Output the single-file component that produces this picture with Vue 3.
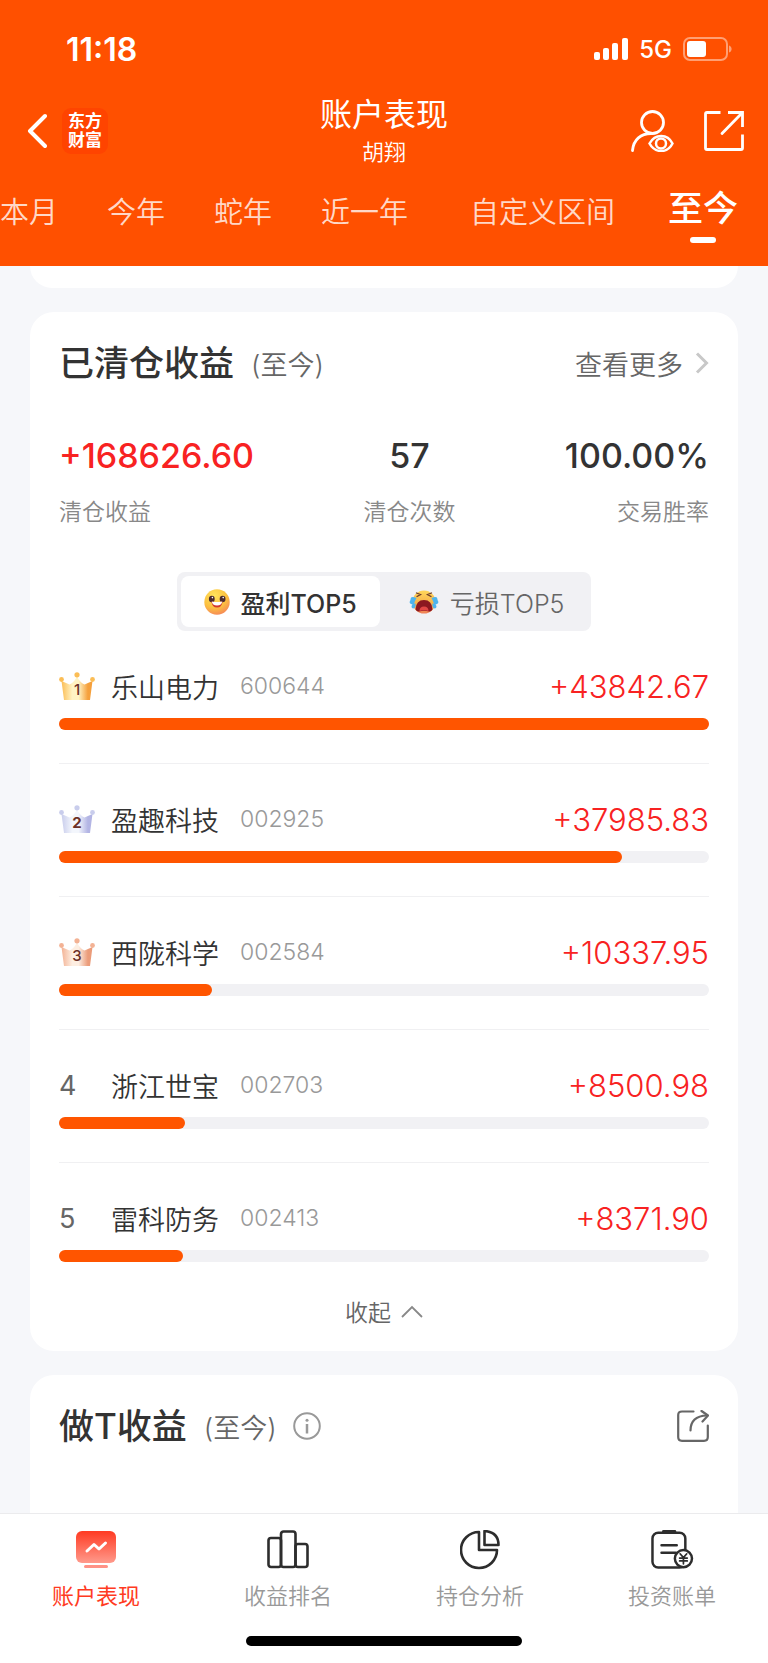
<template>
  <div class="page">
    <header class="header">
      <div class="status-bar">
        <span class="time">11:18</span>
        <div class="status-right">
          <svg class="signal" viewBox="0 0 34 22" width="34" height="22" fill="#fff">
            <rect x="0" y="14" width="6" height="8" rx="2" />
            <rect x="9" y="10" width="6" height="12" rx="2" />
            <rect x="18" y="5" width="6" height="17" rx="2" />
            <rect x="28" y="0" width="6" height="22" rx="2" />
          </svg>
          <span class="network">5G</span>
          <svg viewBox="0 0 50 24" width="50" height="24">
            <rect x="1" y="1" width="43" height="22" rx="6" fill="none" stroke="#fff" stroke-opacity="0.45" stroke-width="2" />
            <rect x="4" y="4" width="19" height="16" rx="3" fill="#fff" />
            <path d="M46 8.500c3.500 1 3.500 6 0 7z" fill="#fff" fill-opacity="0.45" />
          </svg>
        </div>
      </div>

      <div class="nav-bar">
        <div class="nav-left">
          <button class="icon-btn" aria-label="返回">
            <svg viewBox="0 0 20 36" width="20" height="36" fill="none" stroke="#fff" stroke-width="4" stroke-linecap="round" stroke-linejoin="round">
              <path d="M18 3 3 18l15 15" />
            </svg>
          </button>
          <span class="logo">东方<br />财富</span>
        </div>
        <div class="nav-title">
          <h1>账户表现</h1>
          <p>胡翔</p>
        </div>
        <div class="nav-right">
          <button class="icon-btn" aria-label="账户查看">
            <svg viewBox="0 0 43 42" width="43" height="42" fill="none" stroke="#fff" stroke-width="2.800" stroke-linecap="round">
              <circle cx="21.500" cy="12.500" r="11" />
              <path d="M1.500 40.500C2.500 29.500 10 23.500 20 23.500" />
              <path d="M18.500 33.500C24 23.500 36.500 23.500 41.500 33.500C36.500 43.500 24 43.500 18.500 33.500Z" stroke-width="2.500" />
              <circle cx="30" cy="33.500" r="5" stroke-width="2.500" />
            </svg>
          </button>
          <button class="icon-btn" aria-label="分享">
            <svg viewBox="0 0 40 40" width="40" height="40" fill="none" stroke="#fff" stroke-width="2.800" stroke-linejoin="round">
              <path d="M16.500 1.500H3q-1.500 0-1.500 1.500V37q0 1.500 1.500 1.500H37q1.500 0 1.500-1.500V23.500" />
              <path d="M24 1.500H38.500V16" stroke-linejoin="miter" />
              <path d="M38 2 18 22.500" stroke-linecap="round" />
            </svg>
          </button>
        </div>
      </div>

      <nav class="range-tabs">
        <button
          v-for="item in ranges"
          :key="item"
          :class="['range-tab', { active: item === currentRange, custom: item === '自定义区间' }]"
          @click="currentRange = item"
        >{{ item }}</button>
      </nav>
    </header>

    <main class="content">
      <section class="card card-prev"></section>

      <section class="card">
        <div class="card-head">
          <h2>已清仓收益</h2>
          <span class="range-text">({{ currentRange }})</span>
          <a class="more" href="#">
            查看更多
            <svg viewBox="0 0 14 22" width="14" height="22" fill="none" stroke="#c8c8c8" stroke-width="3">
              <path d="M2 1.500 11.500 11 2 20.500" />
            </svg>
          </a>
        </div>

        <div class="stats">
          <div v-for="s in stats" :key="s.label" class="stat">
            <div :class="['stat-value', { up: s.up }]">{{ s.value }}</div>
            <div class="stat-label">{{ s.label }}</div>
          </div>
        </div>

        <div class="switch">
          <button :class="{ active: mode === 'win' }" @click="mode = 'win'">
            <svg viewBox="0 0 26 26" width="26" height="26">
              <defs>
                <radialGradient id="smile" cx="0.4" cy="0.25" r="0.8">
                  <stop offset="0" stop-color="#ffe45c" />
                  <stop offset="0.6" stop-color="#fcc040" />
                  <stop offset="1" stop-color="#f5855a" />
                </radialGradient>
              </defs>
              <circle cx="13" cy="13" r="12.700" fill="url(#smile)" />
              <ellipse cx="7.800" cy="10" rx="2.900" ry="3.200" fill="#4b2b2e" />
              <ellipse cx="18.600" cy="10" rx="2.900" ry="3.200" fill="#4b2b2e" />
              <circle cx="8.400" cy="8.600" r="0.800" fill="#fff" />
              <circle cx="19.200" cy="8.600" r="0.800" fill="#fff" />
              <path d="M7.500 12.500q5.500 1.300 11 0-.5 6-5.500 6t-5.500-6z" fill="#d3372c" />
              <path d="M7.800 12.500q5.200 1.200 10.400 0-.5 4-5.200 4t-5.200-4z" fill="#fff" />
            </svg>
            <span>盈利TOP5</span>
          </button>
          <button :class="{ active: mode === 'lose' }" @click="mode = 'lose'">
            <svg viewBox="0 0 30 26" width="30" height="26">
              <defs>
                <linearGradient id="cry" x1="0" y1="0" x2="0" y2="1">
                  <stop offset="0" stop-color="#ffd75a" />
                  <stop offset="0.6" stop-color="#f7b04a" />
                  <stop offset="1" stop-color="#ef8058" />
                </linearGradient>
              </defs>
              <circle cx="15" cy="13" r="11.500" fill="url(#cry)" />
              <path d="M7.500 4l4 1.500-3.500 2M22.500 4l-4 1.500 3.500 2" stroke="#6b3b2c" stroke-width="1.300" fill="none" stroke-linecap="round" />
              <path d="M6.500 20.500Q7 11 15 11t8.500 9.500q-1.500 2.500-3.500 2-5-1.500-10 0-2 .5-3.500-2z" fill="#8c1820" />
              <path d="M10.500 22q0-4.500 4.500-4.500t4.500 4.500q-4.500-1.500-9 0z" fill="#e24745" />
              <path d="M7.500 9Q1 6.500 1.500 11q-2 3 .5 4 3 1 4-3zM4 14.500q-3 4 0 5 3 0 2.500-5z" fill="#4db4ee" />
              <path d="M22.500 9Q29 6.500 28.500 11q2 3-.5 4-3 1-4-3zM26 14.500q3 4 0 5-3 0-2.500-5z" fill="#4db4ee" />
            </svg>
            <span>亏损TOP5</span>
          </button>
        </div>

        <ul class="rank-list">
          <li v-for="(stock, index) in shownStocks" :key="stock.code" class="rank-item">
            <div class="rank-row">
              <span class="rank-no">
                <svg v-if="index < 3" viewBox="0 0 36 28" width="36" height="28">
                  <defs>
                    <linearGradient :id="'crown' + index">
                      <stop offset="0" :stop-color="crowns[index].edge" />
                      <stop offset="0.35" :stop-color="crowns[index].mid" />
                      <stop offset="0.55" :stop-color="crowns[index].mid" />
                      <stop offset="0.85" :stop-color="crowns[index].side" />
                    </linearGradient>
                  </defs>
                  <path d="M2.500 9l8 3.500Q15.500 10.500 18 4q2.500 6.500 7.500 8.500l8-3.500L31 28H5z" :fill="'url(#crown' + index + ')'" />
                  <g :fill="crowns[index].edge">
                    <circle cx="2.500" cy="7.500" r="2.400" />
                    <circle cx="18" cy="2.800" r="2.600" />
                    <circle cx="33.500" cy="7.500" r="2.400" />
                  </g>
                  <text x="18" y="23" text-anchor="middle" :class="['crown-no', 'n' + index]">{{ index + 1 }}</text>
                </svg>
                <template v-else>{{ index + 1 }}</template>
              </span>
              <span class="name">{{ stock.name }}</span>
              <span class="code">{{ stock.code }}</span>
              <span class="profit">+{{ stock.profit.toFixed(2) }}</span>
            </div>
            <div class="bar">
              <div class="bar-inner" :style="{ width: barWidth(stock) }"></div>
            </div>
          </li>
        </ul>

        <button class="fold" @click="folded = !folded">
          {{ folded ? '展开' : '收起' }}
          <svg :class="{ down: folded }" viewBox="0 0 22 13" width="22" height="13" fill="none" stroke="#888" stroke-width="1.800">
            <path d="M1 12 11 2l10 10" />
          </svg>
        </button>
      </section>

      <section class="card card-last">
        <div class="card-head">
          <h2>做T收益</h2>
          <span class="range-text">({{ currentRange }})</span>
          <button class="icon-btn info" aria-label="说明">
            <svg viewBox="0 0 28 28" width="28" height="28" fill="none" stroke="#999" stroke-width="2">
              <circle cx="14" cy="14" r="12.800" />
              <path d="M14 12v9.500" stroke-width="2.500" />
              <circle cx="14" cy="8.300" r="1.500" fill="#999" stroke="none" />
            </svg>
          </button>
          <button class="icon-btn share" aria-label="分享做T收益">
            <svg viewBox="0 0 32 32" width="32" height="32" fill="none" stroke="#666" stroke-width="2.200" stroke-linecap="round" stroke-linejoin="round">
              <path d="M16.500 1.500H5Q1.200 1.500 1.200 5V27q0 3.800 3.800 3.800H27q3.800 0 3.800-3.800V15.500" />
              <path d="M13.500 20.500Q13.500 6 30 5.500" />
              <path d="M24.500 1 31 5.500l-5.500 6" />
            </svg>
          </button>
        </div>
      </section>
    </main>

    <footer class="footer">
      <nav class="tab-bar">
        <a href="#" class="tab active">
          <svg viewBox="0 0 40 40" width="40" height="40">
            <defs>
              <linearGradient id="board" x1="0" y1="0" x2="0" y2="1">
                <stop offset="0" stop-color="#ff3a22" />
                <stop offset="1" stop-color="#ff9a8c" />
              </linearGradient>
            </defs>
            <rect x="0" y="1" width="40" height="32" rx="6" fill="url(#board)" />
            <rect x="8" y="35" width="24" height="3" rx="1.500" fill="#ff9286" />
            <path d="M11 21l7-6.500 5 4.500 6.500-6" fill="none" stroke="#fff" stroke-width="3" stroke-linecap="round" stroke-linejoin="round" />
          </svg>
          <span>账户表现</span>
        </a>
        <a href="#" class="tab">
          <svg viewBox="0 0 42 40" width="42" height="40" fill="none" stroke="#2d2d2d" stroke-width="2.600">
            <rect x="1.500" y="8" width="12.500" height="29" rx="2.500" />
            <rect x="14" y="1.500" width="14.500" height="35.500" rx="2.500" />
            <rect x="28.500" y="14" width="12" height="23" rx="2.500" />
          </svg>
          <span>收益排名</span>
        </a>
        <a href="#" class="tab">
          <svg viewBox="0 0 40 40" width="40" height="40" fill="none" stroke="#2d2d2d" stroke-width="2.600" stroke-linejoin="round">
            <path d="M19 2A18 18 0 1 0 37 20H19z" />
            <path d="M24.500 1V15H38.500Q38.500 2 24.500 1z" />
          </svg>
          <span>持仓分析</span>
        </a>
        <a href="#" class="tab">
          <svg viewBox="0 0 44 42" width="44" height="42" fill="none" stroke="#2d2d2d" stroke-width="2.600" stroke-linecap="round">
            <rect x="1.500" y="2.800" width="34.500" height="36.500" rx="6" />
            <path d="M13 1.600H25" stroke-width="3" />
            <path d="M11 16H27M11 24H26" />
            <circle cx="34" cy="30" r="9" fill="#fff" />
            <path d="M30.500 25l3.500 4 3.500-4M34 29v6.500M30 29.500h8M30 32.500h8" stroke-width="1.800" />
          </svg>
          <span>投资账单</span>
        </a>
      </nav>
      <div class="home-line"></div>
    </footer>
  </div>
</template>

<script setup>
import { ref, computed } from 'vue'

const ranges = ['本月', '今年', '蛇年', '近一年', '自定义区间', '至今']
const currentRange = ref('至今')

const mode = ref('win')
const folded = ref(false)

const stats = [
  { value: '+168626.60', label: '清仓收益', up: true },
  { value: '57', label: '清仓次数' },
  { value: '100.00%', label: '交易胜率' },
]

const stocks = ref([
  { name: '乐山电力', code: '600644', profit: 43842.67 },
  { name: '盈趣科技', code: '002925', profit: 37985.83 },
  { name: '西陇科学', code: '002584', profit: 10337.95 },
  { name: '浙江世宝', code: '002703', profit: 8500.98 },
  { name: '雷科防务', code: '002413', profit: 8371.90 },
])

// 前三名皇冠颜色：金、银、铜
const crowns = [
  { edge: '#fbbd55', mid: '#fff3c4', side: '#f5a03c' },
  { edge: '#c9cdec', mid: '#f3f6fc', side: '#b3b5e4' },
  { edge: '#f3b294', mid: '#fdeee2', side: '#eb9c7a' },
]

// 收起后只显示前三名
const shownStocks = computed(() => folded.value ? stocks.value.slice(0, 3) : stocks.value)

// 进度条以第一名为 100%
function barWidth(stock) {
  return (stock.profit / stocks.value[0].profit) * 100 + '%'
}
</script>

<style>
body {
  margin: 0;
  background: #f6f7fa;
}
</style>

<style scoped>
.page {
  min-height: 100vh;
  display: flex;
  flex-direction: column;
  background: #f6f7fa;
  color: #333;
  font-family: Inter, "Noto Sans CJK SC", sans-serif;
  font-weight: 350;
}

h1, h2, p, ul {
  margin: 0;
  padding: 0;
  list-style: none;
}

button {
  padding: 0;
  border: none;
  background: none;
  font-family: inherit;
  font-weight: inherit;
  color: inherit;
  cursor: pointer;
}

a {
  color: inherit;
  text-decoration: none;
}

svg {
  display: block;
  flex-shrink: 0;
}

/* 顶部 */
.header {
  background: #ff5000;
  color: #fff;
  overflow: hidden;
}

.status-bar {
  height: 92px;
  padding: 6px 35px 0 66px;
  box-sizing: border-box;
  display: flex;
  align-items: center;
  justify-content: space-between;
}

.time {
  font-size: 32px;
  font-weight: 600;
}

.status-right {
  display: flex;
  align-items: center;
  gap: 11px;
}

.network {
  font-size: 24px;
  font-weight: 500;
}

.nav-bar {
  height: 78px;
  padding: 0 24px;
  display: grid;
  grid-template-columns: 1fr auto 1fr;
  align-items: center;
}

.nav-left,
.nav-right {
  display: flex;
  align-items: center;
}

.nav-left {
  padding-left: 3px;
  gap: 15px;
}

.nav-right {
  justify-content: flex-end;
  gap: 30px;
}

.logo {
  width: 46px;
  height: 46px;
  padding-top: 4px;
  box-sizing: border-box;
  border-radius: 9px;
  background: #ff4400;
  font-size: 17px;
  font-weight: 700;
  line-height: 19px;
  text-align: center;
}

.nav-title {
  text-align: center;
}

.nav-title h1 {
  font-size: 32px;
  font-weight: 400;
  line-height: 42px;
}

.nav-title p {
  font-size: 22px;
  line-height: 32px;
}

.range-tabs {
  height: 96px;
  padding-bottom: 10px;
  box-sizing: border-box;
  display: flex;
  align-items: center;
  gap: 49px;
}

.range-tab {
  flex-shrink: 0;
  font-size: 29px;
  line-height: 46px;
  color: rgba(255, 255, 255, 0.8);
}

.range-tab.custom {
  margin: 0 4px 0 13px;
}

.range-tab.active {
  font-size: 35px;
  font-weight: 500;
  line-height: 48px;
  color: #fff;
}

.range-tab.active::after {
  content: "";
  display: block;
  width: 26px;
  height: 6px;
  margin: 5px auto 0;
  border-radius: 3px;
  background: #fff;
}

/* 卡片 */
.content {
  flex: 1;
  display: flex;
  flex-direction: column;
  gap: 24px;
  padding: 0 30px;
}

.card {
  padding: 26px 29px 24px;
  border-radius: 24px;
  background: #fff;
}

.card-prev {
  padding: 0;
  height: 22px;
  border-radius: 0 0 24px 24px;
}

.card-last {
  flex: 1;
  border-radius: 24px 24px 0 0;
}

.card-head {
  height: 50px;
  display: flex;
  align-items: center;
}

.card-head h2 {
  font-size: 35px;
  font-weight: 500;
  line-height: 50px;
}

.range-text {
  margin-left: 17px;
  font-size: 27px;
  color: #666;
}

.more {
  margin-left: auto;
  display: flex;
  align-items: center;
  gap: 12px;
  font-size: 27px;
  color: #666;
}

.info {
  margin-left: 16px;
}

.share {
  margin-left: auto;
}

.stats {
  margin-top: 44px;
  display: flex;
  justify-content: space-between;
}

.stat {
  text-align: center;
}

.stat:first-child {
  text-align: left;
}

.stat:last-child {
  text-align: right;
}

.stat-value {
  font-size: 34px;
  font-weight: 500;
  line-height: 48px;
}

.stat-value.up {
  color: #f82222;
}

.stat-label {
  margin-top: 18px;
  font-size: 23px;
  line-height: 28px;
  color: #888;
}

.switch {
  width: fit-content;
  margin: 46px auto 0;
  padding: 4px;
  display: flex;
  gap: 6px;
  border-radius: 8px;
  background: #f1f1f4;
}

.switch button {
  height: 51px;
  padding: 0 23px;
  display: flex;
  align-items: center;
  gap: 11px;
  border-radius: 8px;
  font-size: 25px;
  color: #666;
}

.switch button.active {
  background: #fff;
  font-weight: 500;
  color: #333;
}

/* 排行 */
.rank-item {
  padding: 34px 0 33px;
  border-bottom: 1px solid #f0f0f2;
}

.rank-item:last-child {
  border-bottom: none;
}

.rank-row {
  height: 42px;
  display: flex;
  align-items: center;
}

.rank-no {
  width: 52px;
  font-size: 27px;
  font-weight: 400;
  color: #666;
}

.crown-no {
  font-size: 15px;
  font-weight: 500;
  fill: #6b3028;
}

.crown-no.n1 {
  font-weight: 700;
}

.name {
  font-size: 27px;
}

.code {
  margin-left: 21px;
  font-size: 23px;
  color: #999;
}

.profit {
  margin-left: auto;
  font-size: 31px;
  font-weight: 350;
  color: #f82222;
}

.bar {
  height: 12px;
  margin-top: 11px;
  border-radius: 6px;
  background: #f1f1f4;
}

.bar-inner {
  height: 100%;
  border-radius: 6px;
  background: #ff5500;
}

.fold {
  height: 32px;
  margin: 0 auto;
  display: flex;
  align-items: center;
  gap: 10px;
  font-size: 23px;
  color: #666;
}

.fold .down {
  transform: rotate(180deg);
}

/* 底部 */
.footer {
  position: sticky;
  bottom: 0;
  padding: 16px 0 17px;
  border-top: 1px solid #ebebed;
  background: #fff;
}

.tab-bar {
  display: grid;
  grid-template-columns: repeat(4, 1fr);
}

.tab {
  display: flex;
  flex-direction: column;
  align-items: center;
  font-size: 22px;
  line-height: 28px;
  color: #999;
}

.tab svg {
  height: 40px;
  margin-bottom: 12px;
}

.tab.active {
  font-weight: 400;
  color: #ff3a22;
}

.home-line {
  width: 36%;
  height: 10px;
  margin: 26px auto 0;
  border-radius: 5px;
  background: #000;
}
</style>
